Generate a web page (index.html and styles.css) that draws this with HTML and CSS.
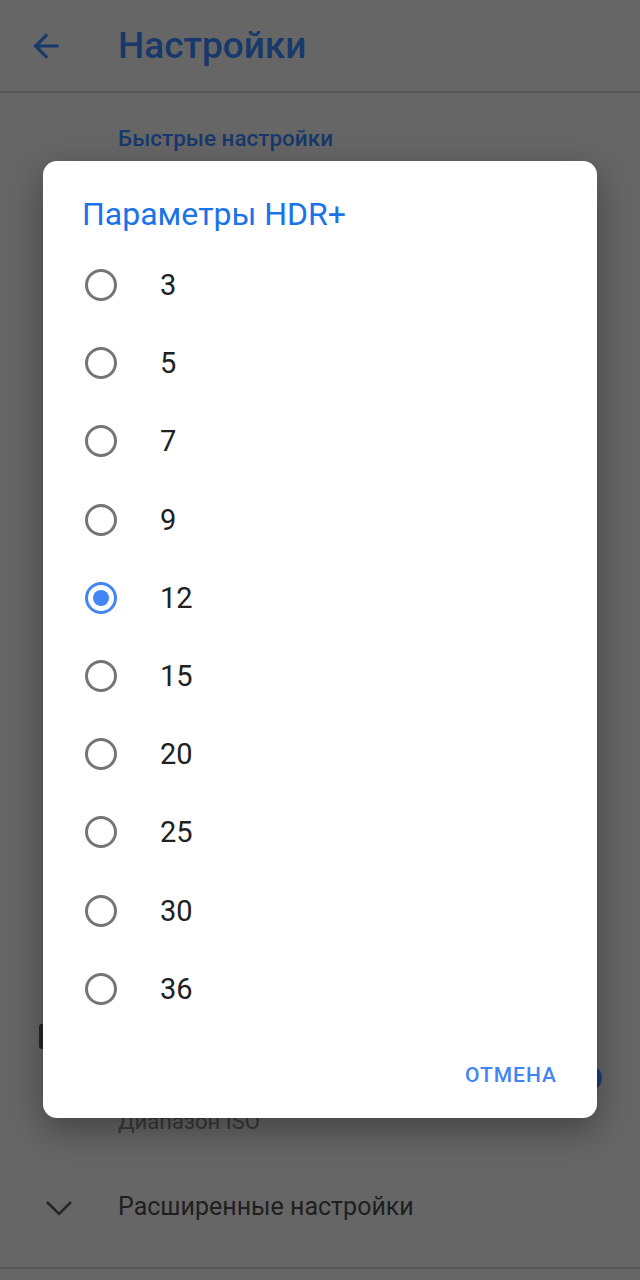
FILE: index.html
```html
<!DOCTYPE html>
<html lang="ru">
<head>
<meta charset="utf-8">
<title>Настройки</title>
<link rel="stylesheet" href="styles.css">
</head>
<body>
<div class="page">
  <header class="appbar">
    <svg class="back" viewBox="0 0 24 24" width="38" height="38"><path d="M20 11H7.83l5.59-5.59L12 4l-8 8 8 8 1.41-1.41L7.83 13H20v-2z"/></svg>
    <h1 class="appbar-title">Настройки</h1>
  </header>
  <div class="section-title">Быстрые настройки</div>
  <div class="spacer"></div>
  <div class="iso-row">
    <div class="iso-icon"></div>
    <div class="iso-text">Диапазон ISO</div>
    <div class="switch-thumb"></div>
  </div>
  <div class="expand-row">
    <svg class="chev" viewBox="0 0 28 16" width="28" height="16"><polyline points="2,2 14,14 26,2"/></svg>
    <span class="expand-text">Расширенные настройки</span>
  </div>
</div>

<div class="dialog">
  <div class="dialog-title">Параметры HDR+</div>
  <div class="options">
    <div class="opt"><span class="radio"></span><span class="lbl">3</span></div>
    <div class="opt"><span class="radio"></span><span class="lbl">5</span></div>
    <div class="opt"><span class="radio"></span><span class="lbl">7</span></div>
    <div class="opt"><span class="radio"></span><span class="lbl">9</span></div>
    <div class="opt"><span class="radio checked"></span><span class="lbl">12</span></div>
    <div class="opt"><span class="radio"></span><span class="lbl">15</span></div>
    <div class="opt"><span class="radio"></span><span class="lbl">20</span></div>
    <div class="opt"><span class="radio"></span><span class="lbl">25</span></div>
    <div class="opt"><span class="radio"></span><span class="lbl">30</span></div>
    <div class="opt"><span class="radio"></span><span class="lbl">36</span></div>
  </div>
  <div class="dialog-actions"><span class="btn">ОТМЕНА</span></div>
</div>
</body>
</html>
```
FILE: styles.css
```css
html, body {
  margin: 0;
  padding: 0;
}
body {
  width: 640px;
  height: 1280px;
  background: #666666;
  font-family: Roboto, "Noto Sans", "Liberation Sans", sans-serif;
  position: relative;
  overflow: hidden;
}
.page {
  display: flex;
  flex-direction: column;
}
.appbar {
  height: 91px;
  border-bottom: 2px solid #575757;
  display: flex;
  align-items: center;
}
.back {
  margin-left: 27px;
  fill: #17396b;
  flex: none;
}
.appbar-title {
  margin: 0 0 0 53px;
  font-size: 37px;
  font-weight: 500;
  color: #17396b;
  line-height: 40px;
}
.section-title {
  margin: 30px 0 0 118px;
  font-size: 22.5px;
  font-weight: 500;
  line-height: 30px;
  color: #17396b;
}
.spacer {
  height: 857px;
}
.iso-row {
  height: 135px;
  display: flex;
  align-items: flex-start;
}
.iso-icon {
  margin: 14px 0 0 39px;
  width: 25px;
  height: 25px;
  border-radius: 3px;
  background: #262626;
  flex: none;
}
.iso-text {
  margin: 97px 0 0 54px;
  font-size: 22px;
  line-height: 30px;
  color: #393939;
}
.switch-thumb {
  align-self: center;
  margin-left: auto;
  margin-right: 38px;
  width: 26px;
  height: 26px;
  border-radius: 50%;
  background: #1c3e78;
}
.expand-row {
  height: 122px;
  border-bottom: 2px solid #575757;
  display: flex;
  align-items: center;
}
.chev {
  margin: 3px 0 0 45px;
  fill: none;
  stroke: #262626;
  stroke-width: 2.6;
  flex: none;
}
.expand-text {
  margin-left: 45px;
  font-size: 25px;
  color: #1f1f1f;
}

.dialog {
  position: absolute;
  left: 43px;
  top: 161px;
  width: 554px;
  height: 957px;
  background: #ffffff;
  border-radius: 14px;
  box-shadow: 0 12px 36px rgba(0, 0, 0, 0.35);
  display: flex;
  flex-direction: column;
}
.dialog-title {
  padding: 35px 39px 0;
  margin-bottom: 14px;
  font-size: 32px;
  line-height: 36px;
  color: #1a73e8;
}
.options {
  display: flex;
  flex-direction: column;
}
.opt {
  height: 78.2px;
  display: flex;
  align-items: center;
  padding-left: 42px;
}
.radio {
  box-sizing: border-box;
  width: 32px;
  height: 32px;
  border: 3px solid #757575;
  border-radius: 50%;
  display: flex;
  align-items: center;
  justify-content: center;
  flex: none;
}
.radio.checked {
  border-color: #4285f4;
}
.radio.checked::after {
  content: "";
  width: 16px;
  height: 16px;
  border-radius: 50%;
  background: #4285f4;
}
.lbl {
  margin-left: 43px;
  font-size: 29px;
  color: #212121;
}
.dialog-actions {
  height: 90px;
  box-sizing: border-box;
  padding: 4px 40px 0 0;
  display: flex;
  align-items: center;
  justify-content: flex-end;
}
.btn {
  font-size: 21px;
  font-weight: 500;
  letter-spacing: 1px;
  color: #4285f4;
}
```
